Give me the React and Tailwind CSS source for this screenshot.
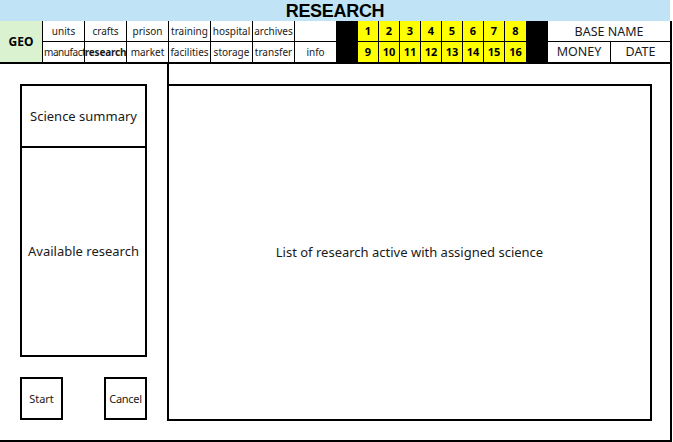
import React from "react";

const row1 = ["units", "crafts", "prison", "training", "hospital", "archives", ""];
const row2 = ["manufact", "research", "market", "facilities", "storage", "transfer", "info"];

function NavCell({ label, bold, left }) {
  return (
    <div
      className={`w-[42px] h-[20px] border-l border-black flex items-center overflow-hidden whitespace-nowrap text-[10px] text-[#1a1a1a] ${
        left ? "justify-start pl-px tracking-[-0.45px]" : "justify-center"
      } ${bold ? "font-bold tracking-[-0.2px]" : ""}`}
    >
      {label}
    </div>
  );
}

export default function App() {
  return (
    <div
      className="w-[673px] h-[442px] bg-white overflow-hidden"
      style={{ fontFamily: '"Noto Sans", "Liberation Sans", sans-serif' }}
    >
      <div className="w-[670px] h-[21px] bg-[#c0e4f5] flex items-center justify-center">
        <span
          className="text-[18px] font-bold leading-none text-black tracking-[-0.3px] pt-px"
          style={{ fontFamily: '"Liberation Sans", Arial, sans-serif' }}
        >
          RESEARCH
        </span>
      </div>
      <div className="w-[672px] h-[421px] border-r-2 border-b-2 border-black flex flex-col">
        <div className="h-[43px] border-b-2 border-black flex">
          <div className="w-[42px] h-[41px] bg-[#daf2d0] flex items-center justify-center text-[12px] font-bold text-black">
            GEO
          </div>
          <div className="flex flex-col">
            <div className="flex h-[21px] border-b border-black">
              {row1.map((l, i) => (
                <NavCell key={i} label={l} />
              ))}
            </div>
            <div className="flex h-[20px]">
              {row2.map((l, i) => (
                <NavCell key={i} label={l} bold={l === "research"} left={l === "manufact"} />
              ))}
            </div>
          </div>
          <div className="w-[22px] h-[41px] bg-black" />
          <div className="flex flex-col bg-[#ffff00]">
            <div className="flex h-[21px] border-b border-black">
              {[1, 2, 3, 4, 5, 6, 7, 8].map((n) => (
                <div
                  key={n}
                  className="w-[21px] h-[20px] border-r border-black last:border-r-0 flex items-center justify-center text-[11px] font-bold text-black"
                >
                  {n}
                </div>
              ))}
            </div>
            <div className="flex h-[20px]">
              {[9, 10, 11, 12, 13, 14, 15, 16].map((n) => (
                <div
                  key={n}
                  className="w-[21px] h-[20px] border-r border-black last:border-r-0 flex items-center justify-center text-[11px] font-bold text-black"
                >
                  {n}
                </div>
              ))}
            </div>
          </div>
          <div className="w-[22px] h-[41px] bg-black" />
          <div className="flex-1 flex flex-col">
            <div className="h-[21px] border-b border-black flex items-center justify-center pt-[2px] text-[12.5px] text-[#1a1a1a]">
              BASE NAME
            </div>
            <div className="h-[20px] flex">
              <div className="w-[63px] border-r border-black flex items-center justify-center pt-px text-[12.5px] text-[#1a1a1a]">
                MONEY
              </div>
              <div className="flex-1 flex items-center justify-center pt-px text-[12.5px] text-[#1a1a1a]">
                DATE
              </div>
            </div>
          </div>
        </div>
        <div className="flex pl-[20px]">
          <div className="w-[127px] pt-[20px] flex flex-col">
            <div className="h-[273px] border-2 border-black flex flex-col">
              <div className="h-[62px] border-b-2 border-black flex items-center justify-center pt-px text-[13px] text-[#1a1a1a]">
                Science summary
              </div>
              <div className="flex-1 flex items-center justify-center pt-px text-[13px] text-[#1a1a1a]">
                Available research
              </div>
            </div>
            <div className="mt-[20px] flex justify-between">
              <div className="w-[43px] h-[43px] border-2 border-black flex items-center justify-center pt-px text-[11px] text-[#1a1a1a]">
                Start
              </div>
              <div className="w-[43px] h-[43px] border-2 border-black flex items-center justify-center pt-px text-[11px] text-[#1a1a1a] tracking-[-0.3px]">
                Cancel
              </div>
            </div>
          </div>
          <div className="ml-[20px] flex flex-col">
            <div className="w-[2px] h-[20px] bg-black" />
            <div className="w-[485px] h-[337px] border-2 border-black flex items-center justify-center pt-px text-[13px] text-[#1a1a1a]">
              List of research active with assigned science
            </div>
          </div>
        </div>
      </div>
    </div>
  );
}
